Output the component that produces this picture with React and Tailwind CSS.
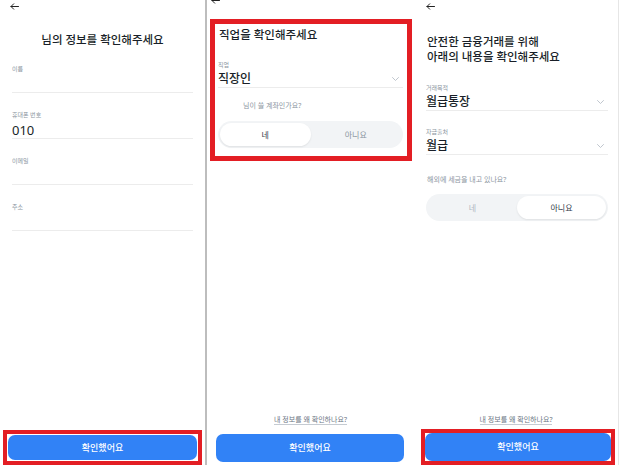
const font = "font-['Noto_Sans','Noto_Sans_CJK_KR',sans-serif]";

function BackArrow({ className = '' }) {
    return (
        <svg className={className} width="9" height="7" viewBox="0 0 9 7" fill="none" stroke="#222" strokeWidth="1" strokeLinecap="round" strokeLinejoin="round">
            <path d="M8.5 3.5H1M3.7 0.8L1 3.5l2.7 2.7" />
        </svg>
    );
}

function Chevron() {
    return (
        <svg width="7" height="4" viewBox="0 0 7 4" fill="none" stroke="#b0b8c1" strokeWidth="0.8" strokeLinecap="round" strokeLinejoin="round">
            <path d="M0.5 0.5L3.5 3.5L6.5 0.5" />
        </svg>
    );
}

function TextField({ label, value, valueClass = 'text-[13px] leading-[16px]' }) {
    return (
        <div className="border-b border-[#ececec]">
            <p className="text-[6px] leading-[8px] text-[#8b95a1]">{label}</p>
            <p className={`mt-[3px] h-[16px] text-[#191f28] ${valueClass}`}>{value}</p>
        </div>
    );
}

function SelectField({ label, value }) {
    return (
        <div className="border-b border-[#ececec]">
            <p className="text-[6px] leading-[8px] text-[#8b95a1]">{label}</p>
            <div className="mt-[2px] flex h-[16px] items-center justify-between pr-[4px]">
                <span className="text-[12px] leading-[16px] font-medium text-[#191f28]">{value}</span>
                <Chevron />
            </div>
        </div>
    );
}

function Toggle({ selected }) {
    return (
        <div className="grid grid-cols-2 rounded-full bg-[#f2f4f6] p-[2px]">
            <div className={`flex h-[23px] items-center justify-center rounded-full text-[8px] ${selected === 'yes' ? 'bg-white text-[#333d4b] shadow-[0_1px_2px_rgba(0,0,0,0.08)]' : 'text-[#b0b8c1]'}`}>네</div>
            <div className={`flex h-[23px] items-center justify-center rounded-full text-[8px] ${selected === 'no' ? 'bg-white text-[#333d4b] shadow-[0_1px_2px_rgba(0,0,0,0.08)]' : 'text-[#8b95a1]'}`}>아니요</div>
        </div>
    );
}

function ConfirmButton({ className = '' }) {
    return (
        <div className={`flex items-center justify-center rounded-[7px] bg-[#3182f6] text-[9px] font-medium text-white ${className}`}>
            확인했어요
        </div>
    );
}

function WhyLink() {
    return (
        <p className="text-center text-[7px] leading-[10px] text-[#6b7684]">
            <span className="border-b border-[#c5cbd2]">내 정보를 왜 확인하나요?</span>
        </p>
    );
}

export default function App() {
    return (
        <div className={`flex h-[465px] w-[620px] overflow-hidden bg-white ${font}`}>
            {/* panel 1 */}
            <div className="flex h-full w-[207px] flex-col border-r-2 border-[#bdbdbd]">
                <BackArrow className="ml-[10px] mt-[3px]" />
                <h1 className="mt-[22px] text-center text-[11.5px] leading-[16px] font-medium text-[#191f28]">님의 정보를 확인해주세요</h1>
                <div className="mt-[17px] flex flex-col gap-[18px] pl-[12px] pr-[12px]">
                    <TextField label="이름" value="" />
                    <TextField label="휴대폰 번호" value="010" />
                    <TextField label="이메일" value="" />
                    <TextField label="주소" value="" />
                </div>
                <div className="mt-auto mx-[3px] border-4 border-[#e31e24] p-px">
                    <ConfirmButton className="h-[25px] rounded-[5px]" />
                </div>
            </div>

            {/* panel 2 */}
            <div className="flex h-full w-[207px] flex-col">
                <BackArrow className="ml-[4px] mt-[-3px]" />
                <div className="mx-[3px] mt-[15px] w-[202px] border-[5px] border-[#e31e24] pb-[8px] pl-[3px] pr-[4px] pt-[3px]">
                    <h2 className="pl-px text-[11.5px] leading-[16px] font-medium text-[#191f28]">직업을 확인해주세요</h2>
                    <div className="mt-[18px]">
                        <SelectField label="직업" value="직장인" />
                    </div>
                    <p className="mt-[13px] pl-[25px] text-[7px] leading-[9px] text-[#8b95a1]">님이 쓸 계좌인가요?</p>
                    <div className="mt-[11px]">
                        <Toggle selected="yes" />
                    </div>
                </div>
                <div className="mt-auto">
                    <WhyLink />
                    <ConfirmButton className="mx-[9px] mb-[3px] mt-[9px] h-[28px] w-[188px]" />
                </div>
            </div>

            {/* panel 3 */}
            <div className="flex h-full w-[205px] flex-col border-r border-[#e6e6e6]">
                <BackArrow className="ml-[12px] mt-[3px]" />
                <h2 className="mt-[24px] pl-[13px] text-[11.5px] leading-[15px] font-medium text-[#191f28]">
                    안전한 금융거래를 위해
                    <br />
                    아래의 내용을 확인해주세요
                </h2>
                <div className="mt-[20px] flex flex-col gap-[17px] pl-[12px] pr-[10px]">
                    <SelectField label="거래목적" value="월급통장" />
                    <SelectField label="자금출처" value="월급" />
                </div>
                <p className="mt-[20px] pl-[13px] text-[7px] leading-[9px] text-[#8b95a1]">해외에 세금을 내고 있나요?</p>
                <div className="mt-[10px] pl-[12px] pr-[10px]">
                    <Toggle selected="no" />
                </div>
                <div className="mt-auto">
                    <WhyLink />
                    <div className="ml-[7px] mr-[3px] mt-[4px] border-4 border-[#e31e24]">
                        <ConfirmButton className="h-[28px]" />
                    </div>
                </div>
            </div>
        </div>
    );
}
